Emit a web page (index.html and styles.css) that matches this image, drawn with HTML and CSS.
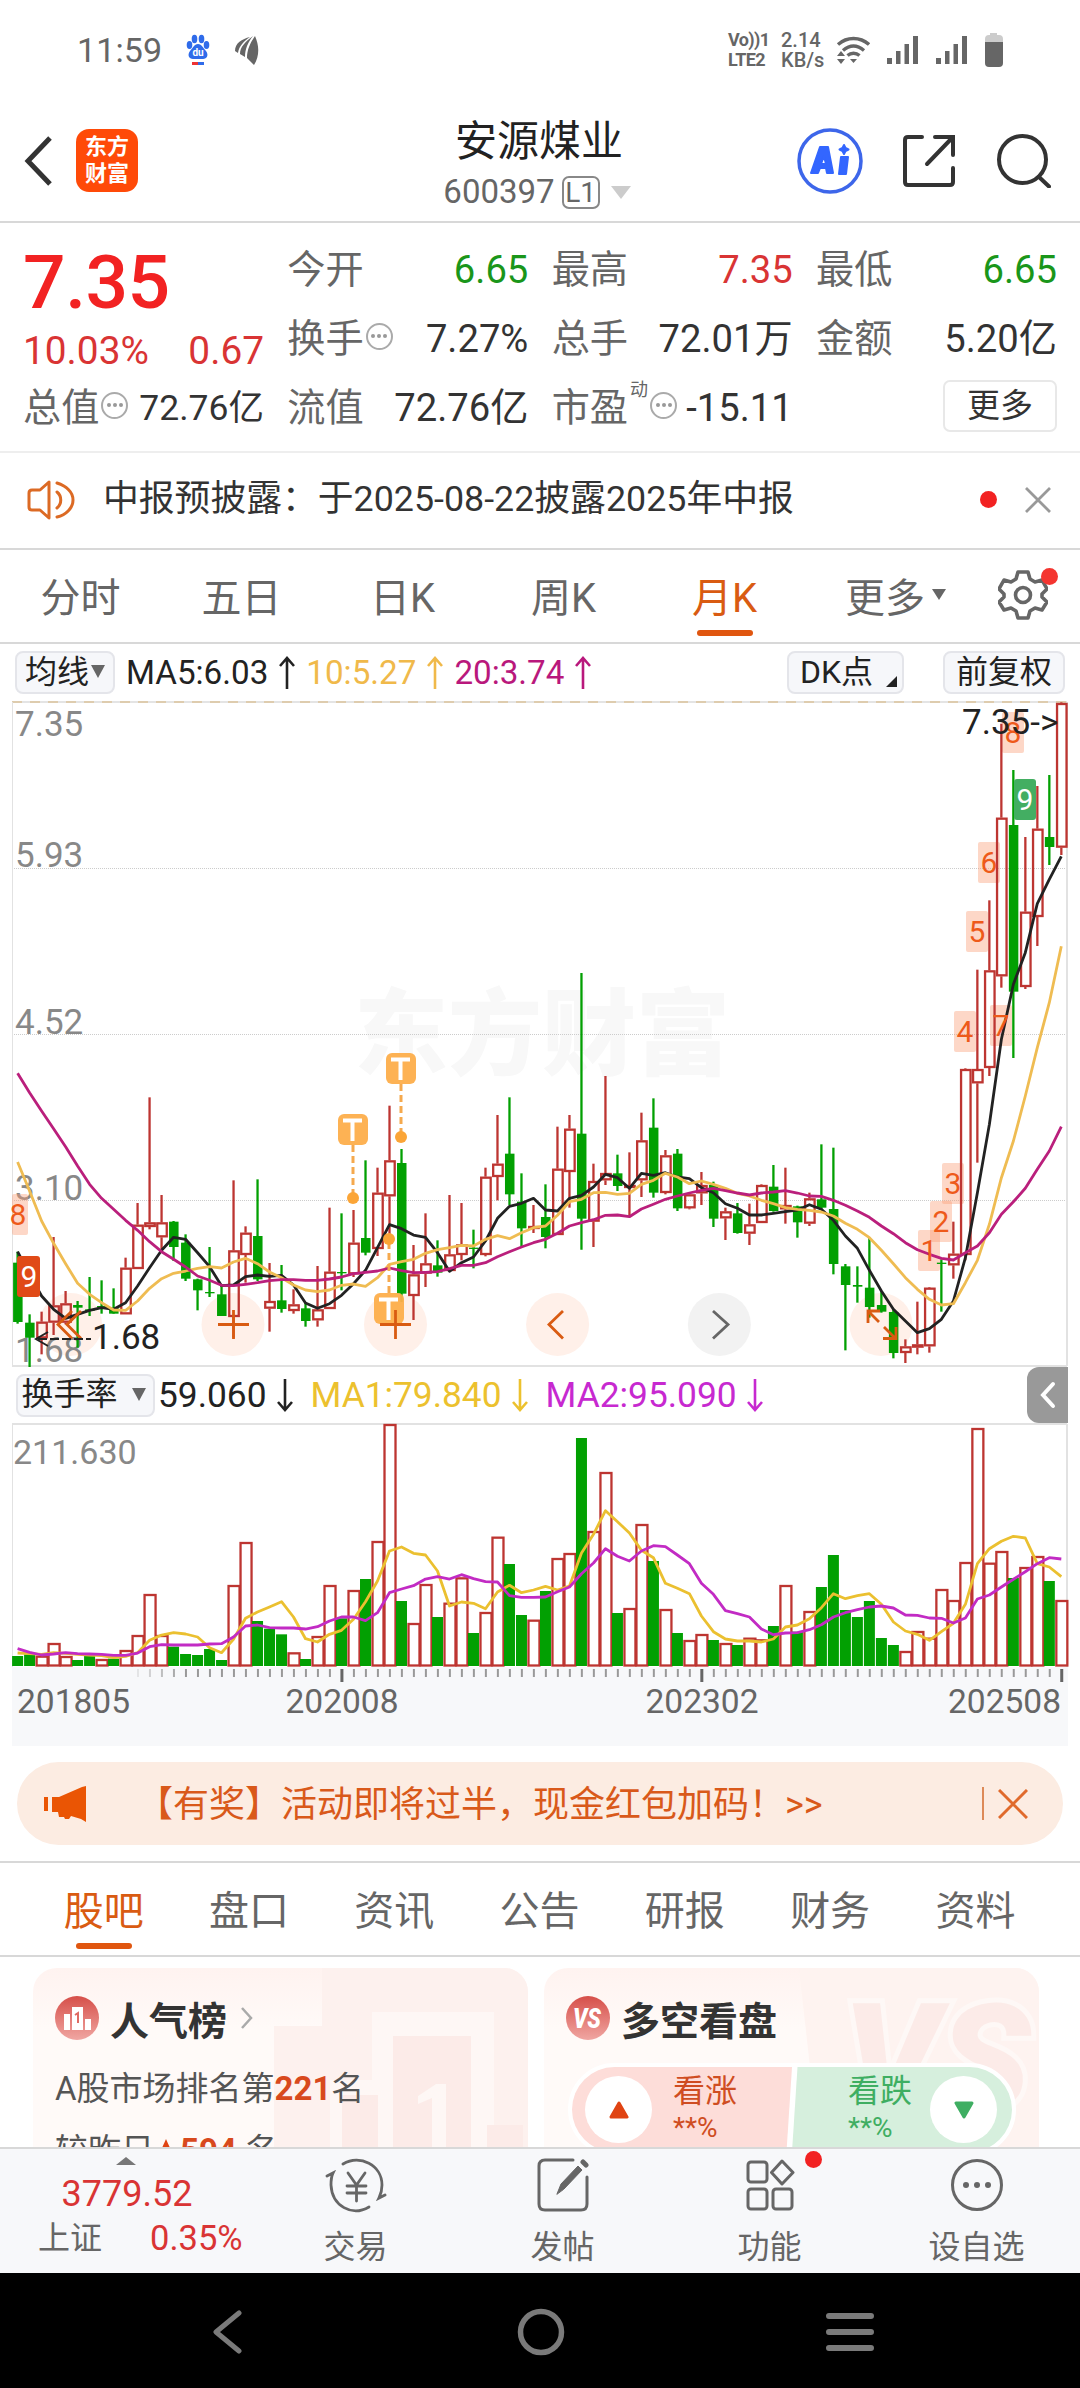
FILE: index.html
```html
<!DOCTYPE html>
<html lang="zh-CN">
<head>
    <meta charset="UTF-8">
    <title>安源煤业 600397</title>
    <link rel="stylesheet" href="styles.css">
</head>
<body>

    <div class="status-bar">
        <span class="clock">11:59</span>
        <svg class="app-icon" width="24" height="32" viewBox="0 0 24 32">
            <g fill="#2f6bea">
                <ellipse cx="3.5" cy="11" rx="2.8" ry="4"/><ellipse cx="8.5" cy="5" rx="2.8" ry="4.2"/>
                <ellipse cx="15.5" cy="5" rx="2.8" ry="4.2"/><ellipse cx="20.5" cy="11" rx="2.8" ry="4"/>
                <path d="M12 10c4 0 5 4 8 7 3 4 1 8-3 8H7c-4 0-6-4-3-8 3-3 4-7 8-7z"/>
            </g>
            <text x="12" y="22" text-anchor="middle" font-size="10" font-weight="700" fill="#fff">du</text>
            <path d="M6 28h6v3H6z" fill="#e33"/><path d="M12 28h6v3h-6z" fill="#2f6bea"/>
        </svg>
        <svg class="app-icon leaf" width="26" height="30" viewBox="0 0 26 30" fill="#666">
            <path d="M16 2C8 4 1 8 1 16l3 2C5 11 10 6 16 2zM19 1C11 7 6 12 6 19l5 3c0-8 3-15 8-21zM21 1c-5 7-8 14-8 22l7 7C26 20 25 10 21 1z"/>
        </svg>
        <span class="spacer"></span>
        <span class="net volte">Vo))1<br>LTE2</span>
        <span class="net speed">2.14<br>KB/s</span>
        <svg class="wifi" width="34" height="30" viewBox="0 0 34 30" fill="none" stroke="#666" stroke-width="3.4">
            <path d="M2 9.500C11 1.500 24 1.500 33 9.500M7 15.500c7-6 14-6 21 0M11.500 20.500c3.500-3 8.500-3 12 0"/>
            <path d="M14 24h7l-3.500 4zM1 21l4-5 4 5zM1 24h8l-4 5z" fill="#666" stroke="none"/>
        </svg>
        <svg class="signal" width="31" height="28" viewBox="0 0 31 28" fill="#666"><path d="M0 22h5v6H0zM9 15h4.500v13H9zM17.500 8H22v20h-4.500zM26 0h5v28h-5z"/></svg>
        <svg class="signal" width="31" height="28" viewBox="0 0 31 28" fill="#666"><path d="M0 22h5v6H0zM9 15h4.500v13H9zM17.500 8H22v20h-4.500zM26 0h5v28h-5z"/></svg>
        <svg class="battery" width="18" height="34" viewBox="0 0 18 34">
            <path d="M5 0h7v2h2q4 0 4 4v5H0V6q0-4 4-4h1z" fill="#ccc"/><path d="M0 9h18v21q0 4-4 4H4q-4 0-4-4z" fill="#666"/>
        </svg>
    </div>

    <header class="header">
        <svg class="back" width="28" height="50" viewBox="0 0 28 50" fill="none" stroke="#333" stroke-width="5"><path d="M26 2L4 25l22 23"/></svg>
        <div class="logo">东方<br>财富</div>
        <div class="title">
            <h1>安源煤业</h1>
            <div class="code">600397<span class="level">L1</span><i class="tri"></i></div>
        </div>
        <div class="actions">
            <svg width="66" height="66" viewBox="0 0 66 66">
                <circle cx="33" cy="33" r="31" fill="none" stroke="#3d66ea" stroke-width="3.500"/>
                <g fill="#3366ff" stroke="#3366ff" stroke-width="2" stroke-linejoin="round">
                    <path fill-rule="evenodd" d="M23 19h8l5 26h-6l-1-5h-6l-2 5h-7zM27 28l-3 8h5z"/>
                    <path d="M44 29h7l-2 17h-7z"/><path d="M47 17l1.500 3 3 1.500-3 1.500-1.500 3-1.500-3-3-1.500 3-1.500z"/>
                </g>
            </svg>
            <svg width="54" height="54" viewBox="0 0 54 54" fill="none" stroke="#333" stroke-width="4" stroke-linecap="round">
                <path d="M20 3H6Q3 3 3 6v42q0 3 3 3h42q3 0 3-3V34M33 3h18v18M51 3L25 30"/>
            </svg>
            <svg width="54" height="54" viewBox="0 0 54 54" fill="none" stroke="#333" stroke-width="4" stroke-linecap="round">
                <circle cx="25.500" cy="25.500" r="23.500"/><path d="M42 43l10 9.500"/>
            </svg>
        </div>
    </header>

    <section class="quote">
        <div class="col col-price">
            <div class="price">7.35</div>
            <div class="pair change"><span>10.03%</span><span>0.67</span></div>
            <div class="pair"><label>总值<i class="info"></i></label><b class="tight">72.76亿</b></div>
        </div>
        <div class="col">
            <div class="pair"><label>今开</label><b class="down">6.65</b></div>
            <div class="pair"><label>换手<i class="info"></i></label><b>7.27%</b></div>
            <div class="pair"><label>流值</label><b>72.76亿</b></div>
        </div>
        <div class="col">
            <div class="pair"><label>最高</label><b class="up">7.35</b></div>
            <div class="pair"><label>总手</label><b>72.01万</b></div>
            <div class="pair"><label>市盈<sup>动</sup><i class="info"></i></label><b>-15.11</b></div>
        </div>
        <div class="col">
            <div class="pair"><label>最低</label><b class="down">6.65</b></div>
            <div class="pair"><label>金额</label><b>5.20亿</b></div>
            <div class="pair right"><span class="more-btn">更多</span></div>
        </div>
    </section>

    <section class="notice">
        <svg width="48" height="40" viewBox="0 0 48 40" fill="none" stroke="#dc6a24" stroke-width="3" stroke-linejoin="round" stroke-linecap="round">
            <path d="M22 2v36l-9-8H5q-3 0-3-3V13q0-3 3-3h8zM30 12c5 4 5 12 0 16M30 3c9 3 16 9 16 17s-7 15-16 17"/>
        </svg>
        <span class="notice-text">中报预披露：于2025-08-22披露2025年中报</span>
        <i class="dot"></i>
        <svg width="28" height="28" viewBox="0 0 28 28" stroke="#999" stroke-width="2.800"><path d="M2 2l24 24M26 2L2 26"/></svg>
    </section>

    <nav class="tabs period">
        <span>分时</span>
        <span>五日</span>
        <span>日K</span>
        <span>周K</span>
        <span class="active">月K</span>
        <span class="more">更多<i class="tri"></i></span>
        <span class="gear">
            <svg width="50" height="50" viewBox="0 0 50 50" fill="none" stroke="#666" stroke-width="3.600" stroke-linejoin="round">
                <path d="M20 2h10l2 7 5 3 7-2 5 9-5 5v3l5 5-5 8-7-2-5 3-2 7H20l-2-7-5-3-7 2-5-8 5-5v-3l-5-5 5-9 7 2 5-3z"/>
                <circle cx="25" cy="25" r="7.500"/>
            </svg>
            <i class="dot"></i>
        </span>
    </nav>

    <div class="legend ma-legend">
        <span class="chip">均线<i class="tri"></i></span>
        <span class="val">MA5:6.03<svg class="arrow" width="16" height="34" viewBox="0 0 16 34"><path d="M8 33V2M1 10l7-8 7 8"/></svg></span>
        <span class="val yellow">10:5.27<svg class="arrow" width="16" height="34" viewBox="0 0 16 34"><path d="M8 33V2M1 10l7-8 7 8"/></svg></span>
        <span class="val pink">20:3.74<svg class="arrow" width="16" height="34" viewBox="0 0 16 34"><path d="M8 33V2M1 10l7-8 7 8"/></svg></span>
        <span class="spacer"></span>
        <span class="chip dk">DK点<i class="corner"></i></span>
        <span class="chip">前复权</span>
    </div>

    <svg class="chart" id="kline" width="1080" height="666" viewBox="0 700 1080 666"></svg>

    <div class="legend vol-legend">
        <span class="chip">换手率<i class="tri"></i></span>
        <span class="val">59.060<svg class="arrow" width="16" height="34" viewBox="0 0 16 34"><path d="M8 1v31M1 24l7 8 7-8"/></svg></span>
        <span class="val gold">MA1:79.840<svg class="arrow" width="16" height="34" viewBox="0 0 16 34"><path d="M8 1v31M1 24l7 8 7-8"/></svg></span>
        <span class="val violet">MA2:95.090<svg class="arrow" width="16" height="34" viewBox="0 0 16 34"><path d="M8 1v31M1 24l7 8 7-8"/></svg></span>
        <span class="spacer"></span>
        <span class="drawer"><svg width="16" height="28" viewBox="0 0 16 28" fill="none" stroke="#fff" stroke-width="4" stroke-linecap="round"><path d="M13 3L3 14l10 11"/></svg></span>
    </div>

    <svg class="chart" id="volume" width="1080" height="324" viewBox="0 1422 1080 324"></svg>

    <section class="banner">
        <svg width="43" height="36" viewBox="0 0 43 36" fill="#ea5504"><path d="M0 11h4v14H0zM8 11h7L38 1l4-1v36l-5-3-10-3-2 3h-4l-1-2h-5l-1-5H8z"/></svg>
        <span class="banner-text">【有奖】活动即将过半，现金红包加码！&gt;&gt;</span>
        <i class="bar"></i>
        <svg width="30" height="30" viewBox="0 0 30 30" stroke="#e06a2c" stroke-width="3"><path d="M1 1l28 28M29 1L1 29"/></svg>
    </section>

    <nav class="tabs sections">
        <span class="active">股吧</span>
        <span>盘口</span>
        <span>资讯</span>
        <span>公告</span>
        <span>研报</span>
        <span>财务</span>
        <span>资料</span>
    </nav>

    <section class="cards">
        <div class="card">
            <svg class="card-art" width="254" height="180" viewBox="0 0 254 180">
                <path d="M48 0h206v180H0V58h48z" fill="#fdf1ee"/>
                <path d="M56 180V112h42V44h122v136z" fill="#fef7f5"/>
                <path d="M119 100h78v80h-78zM68 127h36v53H68zM213 157h36v23h-36zM119 68h78v40h-78z" fill="#fcebe8"/>
                <path d="M144 128l18-12h10v64h-14v-50l-14 6z" fill="#fef7f5"/>
            </svg>
            <div class="card-head">
                <svg width="44" height="44" viewBox="0 0 44 44">
                    <circle cx="22" cy="22" r="22" fill="url(#badge)"/>
                    <path d="M9 18h6v16H9zM17 11h11v23H17zM30 23h6v11h-6z" fill="#fff"/>
                    <path d="M20 19l3-2v10" fill="none" stroke="#df6b64" stroke-width="2"/>
                    <defs><linearGradient id="badge" x1="0" y1="0" x2="0" y2="1"><stop offset="0" stop-color="#d64f49"/><stop offset="1" stop-color="#f0a6a2"/></linearGradient></defs>
                </svg>
                <h3>人气榜</h3>
                <svg width="13" height="22" viewBox="0 0 13 22" fill="none" stroke="#aaa" stroke-width="2.500"><path d="M2 1l9 10-9 10"/></svg>
            </div>
            <p>A股市场排名第<strong>221</strong>名</p>
            <p>较昨日<i class="rise"></i><strong>594</strong> 名</p>
        </div>
        <div class="card">
            <svg class="card-art" width="240" height="180" viewBox="0 0 240 180">
                <path d="M0 0h240v180H20z" fill="#fef3f0"/>
                <text x="44" y="142" font-size="150" font-weight="900" font-style="italic" fill="#fcebe8" stroke="#fef8f6" stroke-width="10" paint-order="stroke">VS</text>
            </svg>
            <div class="card-head">
                <svg width="44" height="44" viewBox="0 0 44 44">
                    <circle cx="22" cy="22" r="22" fill="url(#badge)"/>
                    <text x="21" y="32" text-anchor="middle" font-size="27" font-weight="900" font-style="italic" fill="#fff" textLength="28" lengthAdjust="spacingAndGlyphs">VS</text>
                </svg>
                <h3>多空看盘</h3>
            </div>
            <div class="vote">
                <div class="side bull">
                    <span class="knob"><svg width="22" height="18" viewBox="0 0 22 18"><path d="M11 2l8 14H3z" fill="#e04413" stroke="#e04413" stroke-width="3" stroke-linejoin="round"/></svg></span>
                    <div>看涨<small>**%</small></div>
                </div>
                <div class="side bear">
                    <div>看跌<small>**%</small></div>
                    <span class="knob"><svg width="22" height="18" viewBox="0 0 22 18"><path d="M11 16L3 2h16z" fill="#3fae62" stroke="#3fae62" stroke-width="3" stroke-linejoin="round"/></svg></span>
                </div>
            </div>
        </div>
    </section>

    <footer class="bottom-bar">
        <div class="index">
            <i class="tri"></i>
            <div class="index-value">3779.52</div>
            <div class="index-row"><span>上证</span><span class="up2">0.35%</span></div>
        </div>
        <div class="item">
            <svg width="62" height="56" viewBox="0 0 62 56" fill="none" stroke="#666" stroke-width="2.800" stroke-linecap="round">
                <path d="M18 7c17-10 39 1 39 21 0 5-1 9-3 13l6-3M44 50C27 60 7 49 6 28c0-4 0-8 2-12l-6 3"/>
                <path d="M23 16l8.500 12L40 16M31.500 28v16M22 29h19M22 36h19"/>
            </svg>
            <span>交易</span>
        </div>
        <div class="item">
            <svg width="52" height="56" viewBox="0 0 52 56" fill="none" stroke="#666" stroke-width="3" stroke-linecap="round">
                <path d="M36 3H8Q2 3 2 9v38q0 6 6 6h36q6 0 6-6V20"/><path d="M20 37l4-10L41 9l4 4-18 19z" fill="#666" stroke-width="1"/><path d="M46 5l3 3" stroke-width="5"/>
            </svg>
            <span>发帖</span>
        </div>
        <div class="item">
            <svg width="50" height="56" viewBox="0 0 50 56" fill="none" stroke="#666" stroke-width="3" stroke-linejoin="round">
                <rect x="3" y="5" width="19" height="20" rx="3"/><rect x="3" y="32" width="19" height="20" rx="3"/><rect x="28" y="32" width="19" height="20" rx="3"/>
                <path d="M37 4l11 11.500L37 27 26.500 15.500z"/>
            </svg>
            <span>功能</span>
            <i class="dot"></i>
        </div>
        <div class="item">
            <svg width="54" height="56" viewBox="0 0 54 56" fill="none" stroke="#666" stroke-width="3">
                <circle cx="27" cy="28" r="24.500"/><g fill="#666" stroke="none"><circle cx="16" cy="28" r="3"/><circle cx="27" cy="28" r="3"/><circle cx="38" cy="28" r="3"/></g>
            </svg>
            <span>设自选</span>
        </div>
    </footer>

    <div class="sys-nav">
        <svg width="30" height="44" viewBox="0 0 30 44" fill="none" stroke="#7a7a7a" stroke-width="5" stroke-linecap="round" stroke-linejoin="round"><path d="M26 3L3 22l23 19"/></svg>
        <svg width="48" height="48" viewBox="0 0 48 48" fill="none" stroke="#7a7a7a" stroke-width="5.500"><circle cx="24" cy="24" r="20.500"/></svg>
        <svg width="50" height="38" viewBox="0 0 50 38" stroke="#7a7a7a" stroke-width="6" stroke-linecap="round"><path d="M4 3h42M4 19h42M4 35h42"/></svg>
    </div>

    <script src="chart.js"></script>
</body>
</html>
```

FILE: styles.css
```css
* { box-sizing: border-box; }
body { margin: 0; width: 1080px; height: 2388px; overflow: hidden; background: #fff; color: #333; font-family: Roboto, "Noto Sans CJK SC", sans-serif; display: flex; flex-direction: column; }
h1, h3, p { margin: 0; font-weight: 400; }
svg { flex: none; display: block; }
i { font-style: normal; }
.spacer { flex: 1; }
.dot { width: 17px; height: 17px; border-radius: 50%; background: #f22222; }
.tri { width: 0; height: 0; border: 7px solid transparent; border-top: 12px solid #666; border-bottom: 0; }

/* status bar */
.status-bar { height: 100px; flex: none; display: flex; align-items: center; padding: 0 77px 0 77px; color: #666; }
.clock { font-size: 34px; width: 109px; letter-spacing: 0.1px; }
.leaf { margin-left: 24px; }
.net { font-weight: 500; font-size: 18px; line-height: 20px; white-space: nowrap; }
.volte { width: 53px; letter-spacing: -0.6px; font-weight: 700; }
.speed { width: 55px; font-size: 20px; }
.wifi { margin-right: 17px; }
.signal { margin-right: 18px; }

/* header */
.header { position: relative; height: 123px; flex: none; display: flex; align-items: flex-start; border-bottom: 2px solid #d8d8d8; }
.back { margin: 36px 0 0 24px; }
.logo { width: 62px; height: 63px; margin: 29px 0 0 24px; border-radius: 13px; background: #ff4a08; color: #fff; font-size: 22px; line-height: 27px; font-weight: 700; text-align: center; padding-top: 4px; }
.title { flex: 1; display: flex; flex-direction: column; align-items: center; padding-left: 143px; }
.title h1 { font-size: 42px; line-height: 50px; margin-top: 17px; color: #222; }
.code { display: flex; align-items: center; font-size: 33px; line-height: 36px; margin-top: 7px; color: #666; padding-right: 4px; }
.level { border: 2px solid #888; border-radius: 7px; width: 38px; height: 33px; line-height: 30px; font-size: 28px; text-align: center; margin-left: 7px; }
.code .tri { border-width: 13px 10px 0; border-top-color: #ccc; margin-left: 11px; }
.actions { display: flex; align-items: center; gap: 39px; margin: 28px 29px 0 0; }
.actions svg:nth-child(3) { margin-left: 2px; }

/* quote */
.quote { height: 230px; flex: none; display: flex; justify-content: space-between; padding: 13px 23px 0; border-bottom: 2px solid #eee; font-size: 38.2px; }
.col { width: 241px; }
.pair { display: flex; justify-content: space-between; align-items: center; height: 69px; line-height: 69px; white-space: nowrap; }
.pair b { font-weight: 400; }
.pair label { color: #666; display: flex; align-items: center; }
.pair .tight { font-size: 35.5px; }
.pair.right { justify-content: flex-end; }
.price { height: 88px; line-height: 92px; font-size: 75px; font-weight: 500; color: #f22222; letter-spacing: -0.5px; }
.change { height: 50px; color: #d93434; line-height: 54px; padding-top: 4px; font-size: 38.8px; }
.pair .down { color: #1a961a; }
.pair .up { color: #d93434; }
.info { width: 27px; height: 27px; border: 2px solid #aaa; border-radius: 50%; margin: -7px 0 0 2px; display: flex; align-items: center; justify-content: center; }
.info::before { content: ""; width: 4px; height: 4px; border-radius: 50%; background: #999; box-shadow: -6px 0 #999, 6px 0 #999; }
sup { font-size: 18px; line-height: 18px; align-self: flex-start; margin: 7px 0 0 2px; }
.more-btn { width: 114px; height: 52px; line-height: 47px; border: 2px solid #e8e8e8; border-radius: 7px; font-size: 33px; text-align: center; margin-top: -5px; }

/* notice */
.notice { height: 97px; flex: none; display: flex; align-items: center; padding: 0 28px 2px 27px; border-bottom: 2px solid #d8d8d8; }
.notice-text { font-size: 35.8px; line-height: 50px; margin: -1px 0 0 28px; flex: 1; }
.notice .dot { margin-right: 27px; }

/* tabs */
.tabs { display: flex; flex: none; border-bottom: 2px solid #d8d8d8; font-size: 40px; color: #666; }
.tabs span { position: relative; display: flex; justify-content: center; align-items: center; }
.tabs .active { color: #d95b12; }
.tabs .active::after { content: ""; position: absolute; bottom: 6px; width: 56px; height: 6px; border-radius: 3px; background: #e0560f; }
.period { height: 94px; padding: 0 4px 0 0; }
.period span { width: 161px; padding-bottom: 2px; }
.period .more { padding-left: 20px; }
.period .tri { margin: -2px 0 0 7px; border-width: 11px 7px 0; }
.period .gear { width: 110px; padding-left: 4px; }
.gear .dot { position: absolute; right: 18px; top: 18px; background: #f43530; }

/* legends */
.legend { display: flex; flex: none; align-items: center; }
.ma-legend { height: 57px; padding: 0 15px; font-size: 33.2px; }
.chip { display: flex; align-items: center; justify-content: center; height: 43px; line-height: 38px; background: #f6f7fa; border: 2px solid #e4e5ea; border-radius: 8px; font-size: 32px; color: #222; }
.ma-legend .chip { width: 100px; padding-bottom: 2px; }
.chip .tri { margin-left: 2px; border-width: 13px 7px 0; }
.ma-legend .chip.dk { width: 117px; margin-right: 39px; position: relative; justify-content: flex-start; padding-left: 11px; }
.ma-legend .chip:last-child { width: 122px; }
.corner { position: absolute; right: 5px; bottom: 5px; border-left: 11px solid transparent; border-bottom: 11px solid #222; }
.val { display: flex; align-items: center; margin-left: 11px; color: #222; }
.val .arrow { margin-left: 11px; fill: none; stroke: currentColor; stroke-width: 2.6; }
.val.yellow { color: #f0b94a; }
.val.pink { color: #b9187c; }
.vol-legend { height: 56px; padding: 0 12px 0 16px; font-size: 35.3px; }
.vol-legend .chip { width: 139px; padding: 0 4px 2px 0; }
.vol-legend .tri { margin-left: 14px; }
.vol-legend .val { margin-left: 3px; }
.vol-legend .arrow { margin-left: 10px; }
.val.gold { color: #ecc12e; }
.vol-legend .gold { margin-left: 18px; }
.val.violet { color: #c729d0; }
.vol-legend .violet { margin-left: 18px; }
.drawer { width: 41px; height: 56px; border-radius: 12px 0 0 12px; background: #999; display: flex; align-items: center; justify-content: center; }

/* charts */
.axis-text { font-size: 35px; fill: #888; }
.date-text { font-size: 33.5px; fill: #666; }
.watermark { font-size: 94px; font-weight: 900; fill: #f8f8f8; font-family: "Noto Sans CJK SC", sans-serif; }
.mark { font-size: 30px; text-anchor: middle; }

/* banner */
.banner { height: 83px; flex: none; margin: 15px 17px 16px; border-radius: 42px; background: #fcece2; display: flex; align-items: center; padding: 0 35px 0 27px; color: #d9591a; font-size: 36px; }
.banner-text { flex: 1; margin: -6px 0 0 50px; white-space: nowrap; }
.bar { width: 2px; height: 33px; background: #dd8a58; margin-right: 14px; }

.sections { height: 96px; padding: 0 31px; border-top: 2px solid #d8d8d8; }
.sections span { width: 145.3px; padding-bottom: 2px; }

/* cards */
.cards { height: 190px; flex: none; overflow: hidden; display: flex; gap: 16px; padding: 11px 41px 0 33px; align-items: flex-start; }
.card { position: relative; width: 495px; height: 260px; border-radius: 24px; background: linear-gradient(#fff3f0, #fffaf8 60px); padding: 28px 22px; overflow: hidden; }
.card-art { position: absolute; right: 0; top: 0; }
.card-head { position: relative; display: flex; align-items: center; height: 44px; }
.card-head h3 { font-size: 39px; font-weight: 700; margin: 0 13px 0 11px; }
.card p { position: relative; font-size: 33px; line-height: 62px; color: #555; white-space: nowrap; }
.card .card-head + p { margin-top: 18px; }
.card strong { color: #d8491d; }
.rise { display: inline-block; border: 8px solid transparent; border-bottom: 18px solid #e04413; border-top: 0; margin: 0 6px 0 4px; vertical-align: 5px; }
.vote { position: relative; display: flex; height: 93px; width: 448px; border: 4px solid #fff; border-radius: 47px; margin: 23px 0 0 2px; overflow: hidden; background: #fff; }
.side { display: flex; align-items: center; line-height: 36px; font-size: 32px; }
.side small { display: block; font-size: 28px; line-height: 37px; }
.bull { width: 221px; background: #fdddd9; color: #cf4d22; clip-path: polygon(0 0, 100% 0, 97.5% 100%, 0 100%); padding-left: 13px; }
.bull .knob { margin-right: 21px; }
.bear { width: 221px; margin-left: 0; background: #d6efdd; color: #3fae62; clip-path: polygon(2.5% 0, 100% 0, 100% 100%, 0 100%); justify-content: flex-end; padding-right: 15px; }
.bear .knob { margin-left: 18px; }
.knob { width: 67px; height: 67px; border-radius: 50%; background: #fff; display: flex; align-items: center; justify-content: center; }

/* bottom bar */
.bottom-bar { height: 126px; flex: none; display: flex; background: #f7f8fa; border-top: 2px solid #d8d8d8; color: #666; font-size: 32px; }
.index { width: 252px; display: flex; flex-direction: column; align-items: center; color: #d93434; }
.index .tri { border: 10px solid transparent; border-bottom: 8px solid #777; border-top: 0; margin-top: 8px; }
.index-value { font-size: 36px; line-height: 44px; margin-top: 7px; padding-left: 2px; }
.index-row { display: flex; gap: 48px; line-height: 44px; align-self: flex-start; padding-left: 38px; }
.index-row span:first-child { color: #666; }
.up2 { font-size: 34.5px; }
.item { position: relative; width: 207px; display: flex; flex-direction: column; align-items: center; padding-top: 8px; }
.item span { line-height: 40px; margin-top: 14px; }
.item .dot { position: absolute; right: 51px; top: 2px; }

.sys-nav { height: 116px; flex: none; background: #000; display: flex; align-items: center; justify-content: space-between; padding: 2px 205px 0 213px; }
.sys-nav svg:nth-child(2) { margin-left: 14px; }
```

FILE: chart.js
```javascript
// monthly candles 2018-05 .. 2025-08: colour, high, body top, body bottom, low, turnover top, turnover colour if it differs
const candles = [
    ['g',812,845,1023,1028,885],['g',1000,1025,1070,1158,880],['r',992,1022,1072,1120,887],['r',768,973,1025,1062,849],
    ['r',930,967,1025,1030,888],['g',960,972,980,1100,897],['g',888,985,990,1005,883],['g',898,975,980,998,897,'r'],
    ['g',922,980,998,998,893],['r',830,860,1000,1000,870],['r',666,731,864,864,825],['r',349,724,738,745,702],
    ['r',642,724,769,810,825],['g',720,722,798,840,857],['g',760,785,893,900,879],['g',893,895,928,988,882],
    ['g',798,933,936,948,864],['g',912,940,1005,1005,897],['r',598,808,1008,1070,675],['r',736,755,822,905,546],
    ['g',595,765,895,900,780],['r',846,960,983,1052,803,'g'],['g',852,958,984,995,820],['r',925,970,990,998,877],
    ['g',965,982,1020,1037,894],['r',855,985,1018,1037,828],['r',680,872,984,984,675],['g',697,873,876,928,772],
    ['r',687,785,880,888,690],['g',538,771,815,823,654],['r',560,635,804,825,543],['r',374,538,646,760,192],
    ['g',504,546,938,963,720],['r',792,880,945,1017,789],['r',697,847,878,918,672],['g',778,853,875,887,768],
    ['r',642,820,870,870,728],['r',666,790,822,838,652],['g',746,800,803,862,816],['r',560,587,822,826,756],
    ['r',402,548,588,658,530],['g',349,518,640,672,609],['g',577,662,742,795,762],['r',672,735,738,756,779],
    ['g',610,708,768,802,690],['r',437,563,762,762,594],['r',402,443,573,680,579],['g',-24,458,713,806,231],
    ['r',548,600,722,798,513],['r',285,576,598,612,336],['g',521,577,615,630,756],['r',514,612,616,705,744],
    ['r',395,478,598,648,492],['g',352,440,635,650,600],['r',507,523,636,640,747],['g',504,518,682,690,816],
    ['r',638,640,682,685,840],['r',573,612,637,672,822],['g',602,612,713,738,837],['r',680,691,712,777,849],
    ['g',666,697,756,758,852],['r',668,730,758,792,833],['r',610,612,726,726,838],['g',552,617,690,692,795],
    ['r',560,672,685,728,675],['g',674,676,724,770,812],['r',635,652,728,735,753],['g',490,655,680,685,678],
    ['g',500,684,849,880,582],['g',849,856,912,1108,747],['g',856,912,917,965,768],['g',770,920,978,1010,720],
    ['g',930,972,992,995,831],['g',985,993,1116,1132,852],['r',1075,1096,1116,1146,873],['r',962,1090,1100,1120,813],
    ['r',918,920,1096,1115,833],['g',835,845,848,992,687,'r'],['r',722,818,853,893,720],['r',262,264,822,838,606],
    ['r',-34,264,307,545,204],['r',-242,-32,261,285,608],['r',-772,-490,-14,20,573],['g',-633,-468,32,231,651],
    ['r',-432,-208,18,24,621],['r',-585,-457,-192,-105,588],['g',-618,-432,-402,-348,660],['r',-836,-834,-400,-378,720]
];

const ma5 = [812,880,945,985,1012,1000,988,980,985,965,915,860,808,769,775,815,857,914,912,887,882,886,883,912,966,982,968,943,908,868,800,731,743,762,769,815,871,845,828,780,712,676,667,652,687,690,652,643,618,580,590,622,577,583,575,588,593,620,635,668,682,702,702,697,692,687,671,685,718,765,802,868,930,985,1020,1055,1043,1015,960,830,635,430,175,10,-85,-232,-305,-374];
const ma10 = [543,630,720,787,848,907,940,965,987,988,960,922,893,877,870,862,857,861,843,832,848,873,890,912,927,932,927,913,909,916,890,850,842,835,817,806,800,793,795,775,764,773,755,740,735,703,662,655,635,634,640,637,610,598,577,588,608,600,610,622,637,645,658,668,680,685,688,693,705,727,745,770,808,848,890,925,955,972,968,905,838,730,590,480,345,200,65,-104];
const ma20 = [277,335,390,443,497,555,610,652,685,718,748,782,812,835,858,885,898,913,914,910,905,899,896,896,898,898,894,888,878,874,870,861,869,875,874,872,863,853,853,845,827,812,798,785,775,757,735,725,716,703,702,707,684,670,655,645,636,628,622,629,636,642,636,633,629,636,645,646,658,673,690,709,735,758,785,806,820,832,837,815,795,755,700,662,622,565,510,437];
const vma1 = [876,878,880,875,877,880,882,884,890,886,875,838,822,815,819,828,860,875,835,772,753,738,722,768,833,843,820,808,775,722,660,570,558,577,582,630,735,723,727,743,693,673,695,687,676,687,675,576,520,449,482,516,568,590,667,682,698,765,812,834,840,840,843,834,798,792,773,740,698,713,704,698,730,783,810,820,838,812,787,730,608,563,541,526,531,608,618,647];
const vma2 = [863,874,882,879,875,878,879,880,883,883,876,857,851,852,852,852,849,848,828,795,792,800,801,801,804,797,780,768,768,779,755,695,684,674,654,647,654,641,653,662,663,704,709,709,708,692,678,638,606,563,586,600,570,554,557,582,608,667,700,749,758,768,804,821,816,815,806,791,768,755,746,738,735,741,762,763,771,772,786,771,714,702,678,655,632,608,590,594];

const RED = '#bd3531', GREEN = '#02a002', ORANGE = '#d95b12';
const x = i => 17.6 + i * 11.997;
const py = v => 980 + v / 3;
const vy = v => 1360 + v / 3;

const line = (vals, y, color) =>
    `<polyline fill="none" stroke="${color}" stroke-width="2.8" stroke-linejoin="round" points="${vals.map((v, i) => x(i).toFixed(1) + ',' + y(v).toFixed(1)).join(' ')}"/>`;
const rule = (x1, y1, x2, y2, color, extra = '') =>
    `<line x1="${x1}" y1="${y1}" x2="${x2}" y2="${y2}" stroke="${color}" ${extra}/>`;

function drawKline() {
    let s = '';
    s += `<text class="watermark" x="354" y="1067">东方财富</text>`;
    for (const y of [867.5, 1033.5, 1199.5]) s += rule(12, y, 1067, y, '#ccc', 'stroke-dasharray="1 1"');
    s += rule(12, 701, 1067, 701, '#e4e4e4', 'stroke-width="2"');
    s += rule(12, 701, 1067, 701, '#dcc49c', 'stroke-width="1.5" stroke-dasharray="10 8"');
    s += rule(12.5, 701, 12.5, 1365, '#e2e2e2') + rule(1067, 701, 1067, 1365, '#e2e2e2', 'stroke-width="2"');
    s += rule(12, 1365, 1067, 1365, '#e2e2e2', 'stroke-width="2"');

    // tool buttons behind the candles, "forward" is disabled
    [70.6, 233, 395.5, 557.6, 719.4, 881].forEach((cx, i) => {
        s += `<circle cx="${cx}" cy="1323.5" r="31.5" fill="${i === 4 ? '#f2f2f2' : '#fff0e9'}"/>`;
    });

    [['7.35', 735], ['5.93', 866], ['4.52', 1033], ['3.10', 1199], ['1.68', 1361]].forEach(([t, y]) => {
        s += `<text class="axis-text" x="15" y="${y}">${t}</text>`;
    });

    // countdown marks
    const marks = [['1',918,1229],['2',930,1200],['3',942,1162],['4',954,1010],['5',966,910],['6',978,841],['7',990,1004],['8',1002,711],['8',12,1193]];
    for (const [t, mx, my] of marks) {
        const w = mx === 12 ? 16 : 22;
        s += `<rect x="${mx}" y="${my}" width="${w}" height="41" rx="2" fill="#fb9b74" fill-opacity=".4"/>`;
    }

    candles.forEach(([c, hi, top, bot, lo], i) => {
        const cx = x(i), col = c === 'r' ? RED : GREEN;
        if (c === 'r') {
            s += rule(cx, py(hi), cx, py(top), col, 'stroke-width="2.3"') + rule(cx, py(bot), cx, py(lo), col, 'stroke-width="2.3"');
            s += `<rect x="${cx - 4.3}" y="${py(top) + 1}" width="9.5" height="${Math.max(1, (bot - top) / 3 - 2)}" fill="none" stroke="${col}" stroke-width="2.3"/>`;
        } else {
            s += rule(cx, py(hi), cx, py(lo), col, 'stroke-width="2.3"');
            s += `<rect x="${cx - 4.5}" y="${py(top)}" width="9.5" height="${Math.max(1.3, (bot - top) / 3)}" fill="${col}"/>`;
        }
    });
    s += line(ma5, py, '#222') + line(ma10, py, '#efbc52') + line(ma20, py, '#ba1f7c');

    for (const [t, mx, my] of marks) s += `<text class="mark" x="${mx + (mx === 12 ? 6 : 11)}" y="${my + 31}" fill="#ee5a1a">${t}</text>`;
    s += `<rect x="17" y="1255" width="23" height="41" rx="3" fill="#e04a17"/><text class="mark" x="29" y="1286" fill="#fff">9</text>`;
    s += `<rect x="1014" y="778" width="22" height="41" rx="3" fill="#43ae62"/><text class="mark" x="1025" y="809" fill="#fff">9</text>`;

    // trade markers: box x, box y, anchor dot x, dot y
    [[386,1052,401,1136],[338,1113,353,1197],[374,1292,389,1238]].forEach(([bx, by, dx, dy]) => {
        s += rule(dx, by < dy ? by + 31 : by, dx, dy, '#f5a94e', 'stroke-width="3" stroke-dasharray="7 4"');
        s += `<circle cx="${dx}" cy="${dy}" r="6" fill="#fba537"/>`;
        s += `<rect x="${bx}" y="${by}" width="30" height="31" rx="6" fill="#fdae4b" fill-opacity=".95"/>`;
        s += `<path d="M${bx + 5} ${by + 6.5}h19M${bx + 14.5} ${by + 6}v21" stroke="#fff" stroke-width="4"/>`;
    });

    // tool button icons
    s += `<g fill="none" stroke="${ORANGE}" stroke-width="2.8">
        <path d="M72 1310l-14 13.500 14 14M81 1310l-14 13.500 14 14"/>
        <path d="M218 1323.500h31M233.500 1309v29M380 1323.500h31M395.500 1309v29"/>
        <path d="M563 1310l-14 13.500 14 14"/>
        <path d="M868 1322v-12h12M868 1310l11 11M884 1326l11 11M896 1326v11.500h-13"/>
        <path d="M713 1310l15 13.500-15 14" stroke="#666"/></g>`;

    s += `<text x="92" y="1348" font-size="35" fill="#222">1.68</text>`;
    s += `<path d="M48 1331l-12 7 12 7" fill="none" stroke="#222" stroke-width="2"/>` + rule(38, 1338, 91, 1338, '#222', 'stroke-width="2.2" stroke-dasharray="9 3"');
    s += `<text x="962" y="733" font-size="35" fill="#222">7.35-&gt;</text>`;
    document.getElementById('kline').innerHTML = s;
}

function drawVolume() {
    let s = `<rect x="12" y="1666" width="1056" height="79" fill="#f7f8fa"/>`;
    s += rule(12, 1423, 1067, 1423, '#e2e2e2', 'stroke-width="2"') + rule(12.5, 1423, 12.5, 1666, '#e2e2e2') + rule(1067, 1423, 1067, 1666, '#e2e2e2', 'stroke-width="2"');
    candles.forEach(([c, , , , , top, alt], i) => {
        const cx = x(i), y = vy(top);
        if ((alt || c) === 'r') s += `<rect x="${cx - 5}" y="${y}" width="11" height="${1664.5 - y}" fill="#fff" stroke="${RED}" stroke-width="2.3"/>`;
        else s += `<rect x="${cx - 5.5}" y="${y}" width="11" height="${1665 - y}" fill="${GREEN}"/>`;
    });
    s += line(vma1, vy, '#ebc030') + line(vma2, vy, '#c22bc4');
    s += `<text class="axis-text" x="13" y="1463" style="font-size:34px">211.630</text>`;
    // month ticks fade in from the left
    for (let i = 10; i < 88; i++) {
        const major = i === 27 || i === 57 || i === 87;
        s += rule(x(i) + 0.4, 1668, x(i) + 0.4, major ? 1681 : 1676, major ? '#666' : '#999', `stroke-width="${major ? 3 : 2}" opacity="${Math.min(1, (i - 9) / 5)}"`);
    }
    [['201805', 17, 'start'], ['202008', 342, 'middle'], ['202302', 702, 'middle'], ['202508', 1061, 'end']].forEach(([t, tx, a]) => {
        s += `<text class="date-text" x="${tx}" y="1712" text-anchor="${a}">${t}</text>`;
    });
    document.getElementById('volume').innerHTML = s;
}

drawKline();
drawVolume();
```
